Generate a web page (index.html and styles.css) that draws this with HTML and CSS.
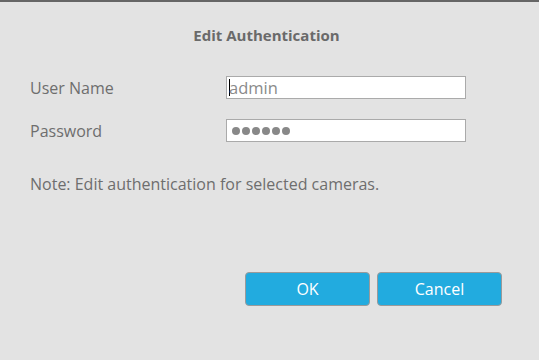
FILE: index.html
```html
<!DOCTYPE html>
<html>
<head>
  <meta charset="UTF-8">
  <title>Edit Authentication</title>
  <link rel="stylesheet" href="styles.css">
</head>
<body>

<div class="dialog">
  <h2 class="title">Edit Authentication</h2>

  <div class="row">
    <label>User Name</label>
    <div class="field"><span class="caret"></span>admin</div>
  </div>
  <div class="row">
    <label>Password</label>
    <div class="field dots">
      <span></span><span></span><span></span><span></span><span></span><span></span>
    </div>
  </div>

  <p class="note">Note: Edit authentication for selected cameras.</p>

  <div class="buttons">
    <button>OK</button>
    <button>Cancel</button>
  </div>
</div>

</body>
</html>
```

FILE: styles.css
```css
body {
  margin: 0;
  font-family: "Open Sans", "Noto Sans", sans-serif;
  background: #e3e3e3;
}
.dialog {
  height: 358px;
  border-top: 2px solid #666;
  background: #e3e3e3;
  color: #6e6e6e;
  font-size: 16px;
}
.title {
  margin: 0;
  padding: 22px 6px 0 0;
  height: 31px;
  line-height: 22px;
  text-align: center;
  font-size: 15px;
  font-weight: bold;
  color: #6a6a6a;
}
.row {
  display: flex;
  align-items: center;
  margin-left: 30px;
  height: 23px;
  margin-top: 21px;
}
.row + .row { margin-top: 20px; }
.row label { width: 196px; }
.field {
  width: 236px;
  height: 21px;
  border: 1px solid #aaa;
  background: #fff;
  color: #8a8a8a;
  font-size: 16.5px;
  padding-left: 2px;
  display: flex;
  align-items: center;
}
.caret {
  width: 1px;
  height: 17px;
  background: #000;
  margin-right: -1px;
}
.dots {
  gap: 2px;
  padding-left: 5px;
  width: 233px;
}
.dots span {
  width: 8px;
  height: 8px;
  border-radius: 50%;
  background: #888;
}
.note {
  margin: 31px 0 0 30px;
  line-height: 22px;
}
.buttons {
  display: flex;
  gap: 7px;
  margin: 77px 0 0 245px;
}
button {
  width: 125px;
  height: 34px;
  background: #22abdf;
  border: 1px solid #9a9a9a;
  border-radius: 4px;
  color: #fff;
  font-family: "Open Sans", "Noto Sans", sans-serif;
  font-size: 16px;
}
```
